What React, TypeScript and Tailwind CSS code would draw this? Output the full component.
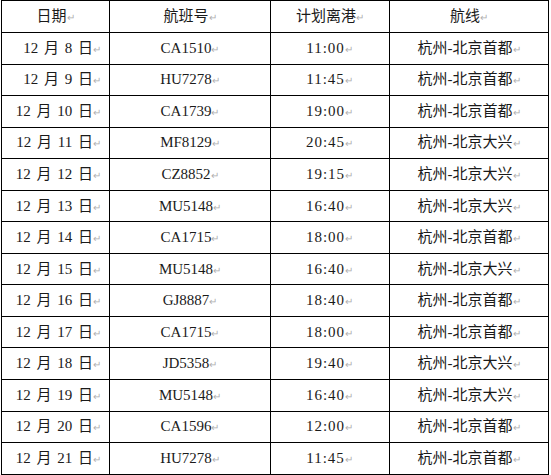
import React from 'react';

// flight schedule rows: date, flight no., departure, route
const flights: [string, string, string, string][] = [
  ['8', 'CA1510', '11:00', '杭州-北京首都'],
  ['9', 'HU7278', '11:45', '杭州-北京首都'],
  ['10', 'CA1739', '19:00', '杭州-北京首都'],
  ['11', 'MF8129', '20:45', '杭州-北京大兴'],
  ['12', 'CZ8852', '19:15', '杭州-北京大兴'],
  ['13', 'MU5148', '16:40', '杭州-北京大兴'],
  ['14', 'CA1715', '18:00', '杭州-北京首都'],
  ['15', 'MU5148', '16:40', '杭州-北京大兴'],
  ['16', 'GJ8887', '18:40', '杭州-北京首都'],
  ['17', 'CA1715', '18:00', '杭州-北京首都'],
  ['18', 'JD5358', '19:40', '杭州-北京大兴'],
  ['19', 'MU5148', '16:40', '杭州-北京大兴'],
  ['20', 'CA1596', '12:00', '杭州-北京首都'],
  ['21', 'HU7278', '11:45', '杭州-北京首都'],
];

// Word-style paragraph mark
function Mark() {
  return <span className="text-[10px] text-[#b0b0b0] align-middle [word-spacing:0]">↵</span>;
}

export default function App() {
  const cell = 'border border-black p-0 whitespace-nowrap leading-none';
  return (
    <div
      className="w-[551px] h-[475px] bg-white text-[15px] text-[#1a1a1a]"
      style={{ fontFamily: '"Liberation Serif", "Noto Sans CJK SC", serif' }}
    >
      <table className="border-collapse ml-px table-fixed" style={{ width: 548 }}>
        <colgroup>
          <col style={{ width: 108 }} />
          <col style={{ width: 161 }} />
          <col style={{ width: 119 }} />
          <col style={{ width: 159 }} />
        </colgroup>
        <thead>
          <tr className="h-[32px]">
            <th className={`${cell} font-normal text-center`}>日期<Mark /></th>
            <th className={`${cell} font-normal text-center`}>航班号<Mark /></th>
            <th className={`${cell} font-normal text-center`}>计划离港<Mark /></th>
            <th className={`${cell} font-normal text-center`}>航线<Mark /></th>
          </tr>
        </thead>
        <tbody>
          {flights.map(([day, no, time, route], i) => (
            <tr key={i} className="h-[31.55px]">
              <td className={`${cell} text-right pr-2 [word-spacing:2px]`}>12 月 {day} 日<Mark /></td>
              <td className={`${cell} text-center`}>{no}<Mark /></td>
              <td className={`${cell} text-center tracking-[1px]`}>{time}<Mark /></td>
              <td className={`${cell} text-center`}>{route}<Mark /></td>
            </tr>
          ))}
        </tbody>
      </table>
    </div>
  );
}
